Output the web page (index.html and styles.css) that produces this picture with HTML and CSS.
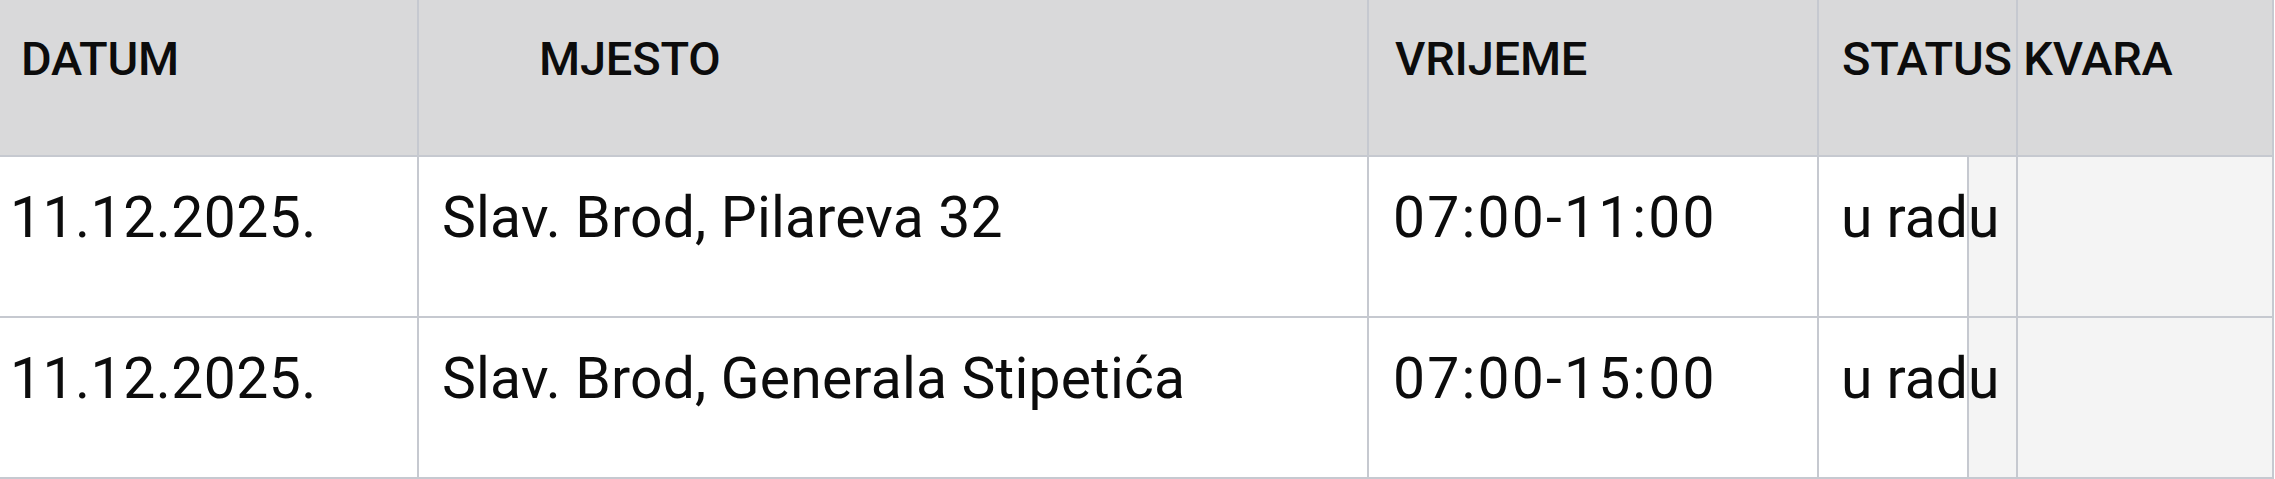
FILE: index.html
```html
<!DOCTYPE html>
<html lang="hr">
<head>
<meta charset="utf-8">
<title>Radovi</title>
<link rel="stylesheet" href="styles.css">
</head>
<body>
<div class="table">
  <div class="th c-datum">DATUM</div>
  <div class="th c-mjesto">MJESTO</div>
  <div class="th c-vrijeme">VRIJEME</div>
  <div class="th c-status">STATUS KVARA</div>
  <div class="th c-extra"></div>

  <div class="td c-datum">11.12.2025.</div>
  <div class="td c-mjesto">Slav. Brod, Pilareva 32</div>
  <div class="td c-vrijeme">07:00-11:00</div>
  <div class="td c-status">u radu</div>
  <div class="td c-gap"></div>
  <div class="td c-extra"></div>

  <div class="td c-datum">11.12.2025.</div>
  <div class="td c-mjesto">Slav. Brod, Generala Stipetića</div>
  <div class="td c-vrijeme">07:00-15:00</div>
  <div class="td c-status">u radu</div>
  <div class="td c-gap"></div>
  <div class="td c-extra"></div>
</div>
</body>
</html>
```
FILE: styles.css
```css
* {
  box-sizing: border-box;
}

html, body {
  margin: 0;
  padding: 0;
  background: #ffffff;
}

body {
  font-family: Roboto, "Noto Sans", sans-serif;
  color: #0c0c0c;
}

.table {
  display: grid;
  grid-template-columns: 419px 950px 450px 150px 49px 256px;
  grid-auto-rows: auto;
  width: 2274px;
}

.th, .td {
  white-space: nowrap;
  border-right: 2px solid #c6c9d0;
  border-bottom: 2px solid #c6c9d0;
}

.th {
  background: #d9d9da;
  height: 157px;
  padding-top: 31px;
  font-size: 47px;
  font-weight: 500;
  line-height: 56px;
  letter-spacing: -0.2px;
}

.th.c-datum { padding-left: 21px; }
.th.c-mjesto { padding-left: 120px; }
.th.c-vrijeme { padding-left: 26px; }
.th.c-status {
  grid-column: span 2;
  padding-left: 23px;
  z-index: 1;
}

.td {
  background: #ffffff;
  height: 161px;
  padding-top: 28px;
  font-size: 57px;
  line-height: 66px;
}

.td.c-datum {
  padding-left: 10px;
  letter-spacing: 0.5px;
}
.td.c-mjesto {
  padding-left: 23px;
  letter-spacing: 0.2px;
}
.td.c-vrijeme {
  padding-left: 24px;
  letter-spacing: 2.2px;
}
.td.c-status {
  padding-left: 22px;
  z-index: 1;
}

.td.c-gap, .td.c-extra {
  background: #f4f4f4;
}
```
